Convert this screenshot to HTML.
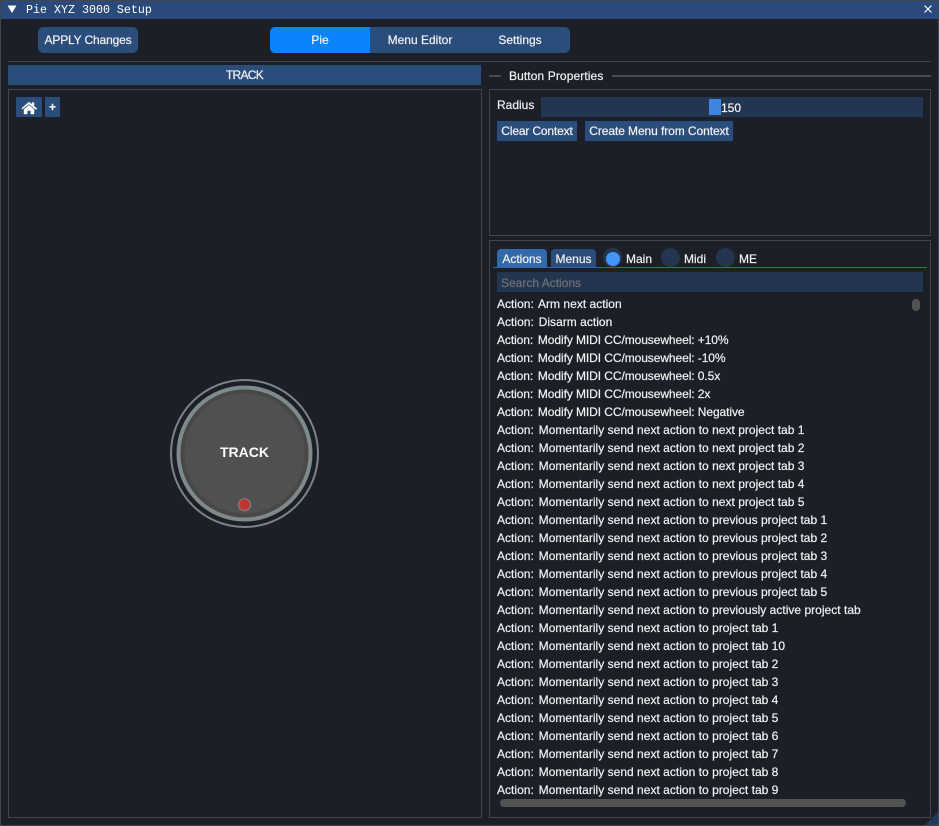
<!DOCTYPE html>
<html><head><meta charset="utf-8">
<style>
html,body{margin:0;padding:0;background:#1c1f28;}
#w{position:relative;width:939px;height:826px;overflow:hidden;background:#1c1f28;font-family:"Liberation Sans",sans-serif;font-size:12px;color:#f2f2f2;-webkit-text-stroke:.2px;}
#w div{position:absolute;box-sizing:border-box;white-space:nowrap;}
.b{background:#2b4d7b;text-align:center;}
.bd{border:1px solid #43444f;}
.t{line-height:18px;height:18px;letter-spacing:.02px;left:497px;}
.m{letter-spacing:-.08px;}
.t b{font-weight:normal;margin-right:1.5px;}
</style></head><body>
<div id="w">
<div style="left:0;top:0;width:939px;height:826px;border:1px solid #43444f;"></div>
<div style="left:1px;top:1px;width:937px;height:18px;background:#294a7a;"></div>
<svg style="position:absolute;left:0;top:0" width="939" height="20"><path d="M7.5 5.5H16.5L12 13Z" fill="#fff"/><path d="M924.5 5.5L931.5 12.5M931.5 5.5L924.5 12.5" stroke="#fff" stroke-width="1.2" fill="none"/></svg>
<div style="left:26px;top:1px;height:18px;line-height:18px;font-family:'Liberation Mono',monospace;font-size:11.67px;color:#fff;-webkit-text-stroke:0;">Pie XYZ 3000 Setup</div>

<div class="b" style="left:38px;top:27px;width:100px;height:26px;line-height:26px;border-radius:5px;letter-spacing:-.15px;">APPLY Changes</div>
<div style="left:270px;top:27px;width:300px;height:26px;background:#2b4d7b;border-radius:5px;"></div>
<div style="left:270px;top:27px;width:100px;height:26px;line-height:26px;background:#0a84fb;border-radius:5px 0 0 5px;text-align:center;">Pie</div>
<div style="left:370px;top:27px;width:100px;height:26px;line-height:26px;text-align:center;">Menu Editor</div>
<div style="left:470px;top:27px;width:100px;height:26px;line-height:26px;text-align:center;">Settings</div>
<div style="left:8px;top:61px;width:923px;height:1px;background:#43444f;"></div>

<div class="b" style="left:8px;top:65px;width:473px;height:20px;line-height:21px;letter-spacing:-.7px;">TRACK</div>
<div class="bd" style="left:8px;top:89px;width:474px;height:729px;"></div>
<div class="b" style="left:16px;top:97px;width:26px;height:20px;"></div>
<svg style="position:absolute;left:16px;top:98px" width="26" height="20"><path d="M6 10L13 4L16 6.5V4.5H18V8.2L21 10.6L20 11.6L13 6L6 11.2Z M8 11.2L13 7.2L18 11.2V16H14.8V12.6H11.2V16H8Z" fill="#fff" stroke="#fff" stroke-width=".4"/></svg>
<div class="b" style="left:45px;top:97px;width:15px;height:20px;line-height:20px;font-weight:bold;">+</div>

<svg style="position:absolute;left:160px;top:370px" width="170" height="165">
<circle cx="84.5" cy="83.5" r="73.5" fill="none" stroke="#7d8486" stroke-width="2"/>
<circle cx="84.5" cy="83.5" r="66" fill="#505050" stroke="#7f8a8a" stroke-width="4"/>
<circle cx="84.5" cy="83.5" r="62" fill="none" stroke="#484848" stroke-width="4"/>
<circle cx="84.5" cy="134.7" r="6" fill="#c03434" stroke="#80807f" stroke-width="1.2"/>
<text x="84.5" y="87" text-anchor="middle" font-family="Liberation Sans" font-weight="bold" font-size="14" fill="#fff" style="-webkit-text-stroke:0">TRACK</text>
</svg>

<div style="left:489px;top:75px;width:12px;height:2px;background:#4a4b57;"></div>
<div style="left:509px;top:67px;height:18px;line-height:18px;letter-spacing:.1px;">Button Properties</div>
<div style="left:612px;top:75px;width:319px;height:2px;background:#4a4b57;"></div>
<div class="bd" style="left:489px;top:89px;width:442px;height:147px;"></div>
<div style="left:497px;top:96px;height:18px;line-height:18px;">Radius</div>
<div style="left:541px;top:97px;width:382px;height:20px;background:#24354f;"></div>
<div style="left:709px;top:99px;width:12px;height:16px;background:#3d85e0;"></div>
<div style="left:721px;top:99px;height:18px;line-height:18px;">150</div>
<div class="b" style="left:497px;top:121px;width:80px;height:20px;line-height:21px;letter-spacing:-.15px;">Clear Context</div>
<div class="b" style="left:585px;top:121px;width:148px;height:20px;line-height:21px;letter-spacing:-.08px;">Create Menu from Context</div>

<div class="bd" style="left:489px;top:240px;width:442px;height:578px;"></div>
<div style="left:497px;top:249px;width:50px;height:18px;line-height:20px;background:#3269ab;border-radius:4px 4px 0 0;text-align:center;">Actions</div>
<div style="left:551px;top:249px;width:45px;height:18px;line-height:20px;background:#2b4d7b;border-radius:4px 4px 0 0;text-align:center;">Menus</div>
<div style="left:493px;top:267px;width:434px;height:1px;background:#2c69b0;"></div>
<div style="left:603px;top:248px;width:19px;height:19px;border-radius:50%;background:#24354f;"></div>
<div style="left:605.5px;top:251.5px;width:14px;height:14px;border-radius:50%;background:#4296fa;"></div>
<div style="left:626px;top:250px;height:18px;line-height:18px;">Main</div>
<div style="left:661px;top:248px;width:19px;height:19px;border-radius:50%;background:#24354f;"></div>
<div style="left:684px;top:250px;height:18px;line-height:18px;">Midi</div>
<div style="left:716px;top:248px;width:19px;height:19px;border-radius:50%;background:#24354f;"></div>
<div style="left:739px;top:250px;height:18px;line-height:18px;">ME</div>
<div style="left:497px;top:272px;width:426px;height:20px;line-height:22px;background:#24354f;color:#6f7278;padding-left:4px;">Search Actions</div>

<div class="t" style="top:295px;"><b>Action:</b> Arm next action</div>
<div class="t" style="top:313px;"><b>Action:</b> Disarm action</div>
<div class="t m" style="top:331px;"><b>Action:</b> Modify MIDI CC/mousewheel: +10%</div>
<div class="t m" style="top:349px;"><b>Action:</b> Modify MIDI CC/mousewheel: -10%</div>
<div class="t m" style="top:367px;"><b>Action:</b> Modify MIDI CC/mousewheel: 0.5x</div>
<div class="t m" style="top:385px;"><b>Action:</b> Modify MIDI CC/mousewheel: 2x</div>
<div class="t m" style="top:403px;"><b>Action:</b> Modify MIDI CC/mousewheel: Negative</div>
<div class="t" style="top:421px;"><b>Action:</b> Momentarily send next action to next project tab 1</div>
<div class="t" style="top:439px;"><b>Action:</b> Momentarily send next action to next project tab 2</div>
<div class="t" style="top:457px;"><b>Action:</b> Momentarily send next action to next project tab 3</div>
<div class="t" style="top:475px;"><b>Action:</b> Momentarily send next action to next project tab 4</div>
<div class="t" style="top:493px;"><b>Action:</b> Momentarily send next action to next project tab 5</div>
<div class="t" style="top:511px;"><b>Action:</b> Momentarily send next action to previous project tab 1</div>
<div class="t" style="top:529px;"><b>Action:</b> Momentarily send next action to previous project tab 2</div>
<div class="t" style="top:547px;"><b>Action:</b> Momentarily send next action to previous project tab 3</div>
<div class="t" style="top:565px;"><b>Action:</b> Momentarily send next action to previous project tab 4</div>
<div class="t" style="top:583px;"><b>Action:</b> Momentarily send next action to previous project tab 5</div>
<div class="t" style="top:601px;"><b>Action:</b> Momentarily send next action to previously active project tab</div>
<div class="t" style="top:619px;"><b>Action:</b> Momentarily send next action to project tab 1</div>
<div class="t" style="top:637px;"><b>Action:</b> Momentarily send next action to project tab 10</div>
<div class="t" style="top:655px;"><b>Action:</b> Momentarily send next action to project tab 2</div>
<div class="t" style="top:673px;"><b>Action:</b> Momentarily send next action to project tab 3</div>
<div class="t" style="top:691px;"><b>Action:</b> Momentarily send next action to project tab 4</div>
<div class="t" style="top:709px;"><b>Action:</b> Momentarily send next action to project tab 5</div>
<div class="t" style="top:727px;"><b>Action:</b> Momentarily send next action to project tab 6</div>
<div class="t" style="top:745px;"><b>Action:</b> Momentarily send next action to project tab 7</div>
<div class="t" style="top:763px;"><b>Action:</b> Momentarily send next action to project tab 8</div>
<div class="t" style="top:781px;"><b>Action:</b> Momentarily send next action to project tab 9</div>

<div style="left:912px;top:299px;width:8px;height:12px;border-radius:4px;background:#525252;"></div>
<div style="left:500px;top:799px;width:406px;height:8px;border-radius:4px;background:#525252;"></div>
<svg style="position:absolute;left:919px;top:806px" width="20" height="20"><path d="M19 6V19H6Z" fill="#203a5f"/></svg>
</div>
</body></html>
